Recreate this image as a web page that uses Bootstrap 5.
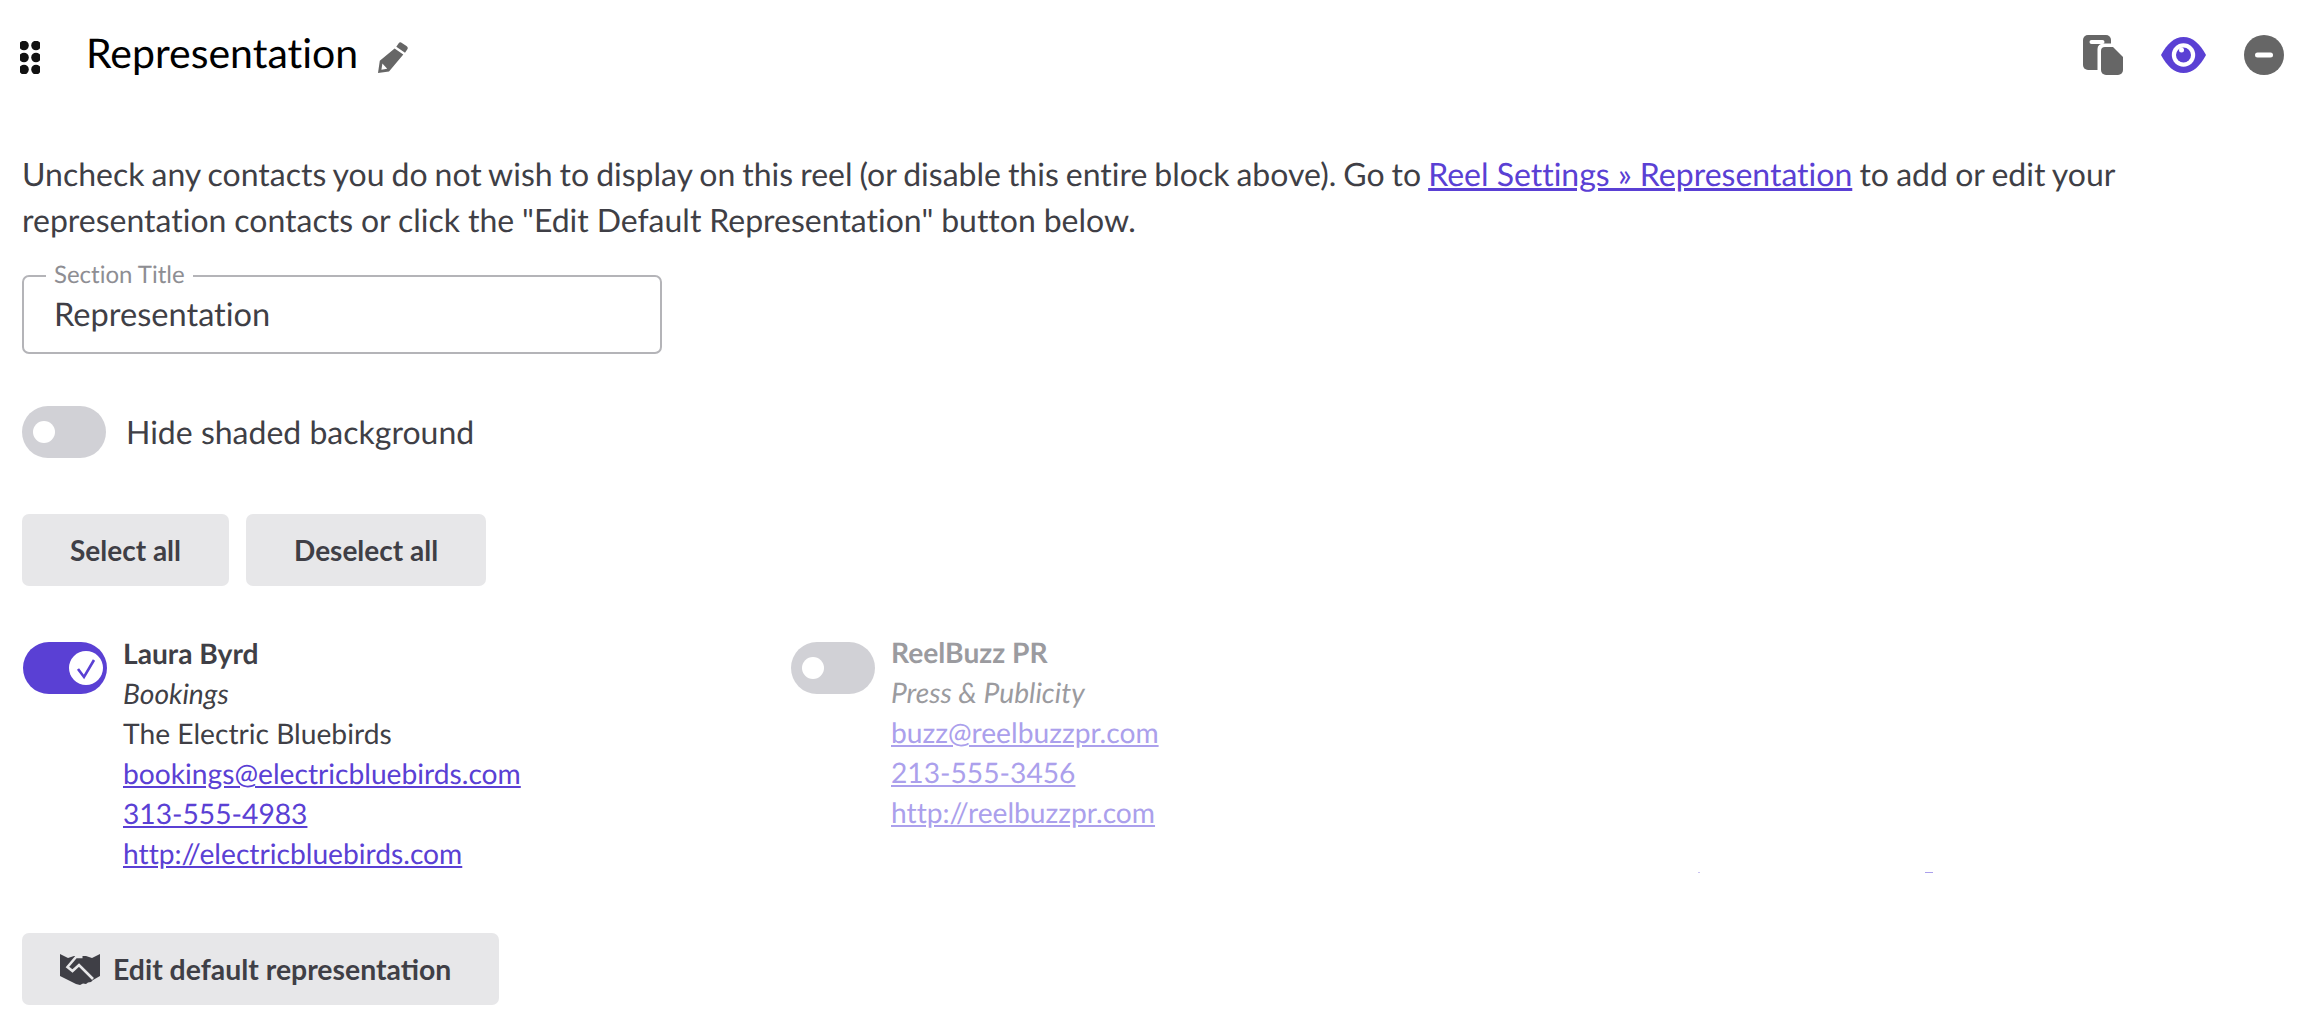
<!DOCTYPE html>
<html lang="en">
<head>
    <meta charset="UTF-8">
    <meta name="viewport" content="width=device-width, initial-scale=1.0">
    <title>Representation</title>
    <link href="https://cdn.jsdelivr.net/npm/bootstrap@5.3.3/dist/css/bootstrap.min.css" rel="stylesheet">
    <style>
        body { font-family: Lato, "Liberation Sans", sans-serif; color: #3f3f46; background: #fff; font-size: 32px; line-height: 46px; text-rendering: geometricPrecision; font-variant-ligatures: none; }
        a { color: #5a40d4; }
        .block-head { height: 110px; padding-left: 20px; padding-right: 22px; }
        .block-title { font-size: 41px; line-height: 50px; font-weight: 400; color: #000; margin: -4px 0 0 46px; }
        .grip-icon { width: 20px; height: 33px; margin-top: 5px; }
        .pencil-icon { width: 30px; height: 31px; margin-left: 20px; margin-top: 4px; }
        .head-icons { gap: 38px; }
        .intro-text { padding: 41px 22px 0; margin: 0; }
        .tight-words { word-spacing: -1.2px; }
        .tight-tail { word-spacing: -1px; }
        .tight-line { word-spacing: -.3px; }
        .title-field { width: 640px; height: 79px; margin: 32px 0 0 22px; border: 2px solid #b4b4b8; border-radius: 7px; padding: 14px 20px 0 30px; line-height: 46px; font-size: 32.6px; }
        .title-label { top: -16px; left: 22px; padding: 0 8px; font-size: 24px; line-height: 28px; color: #8e8e93; background: #fff; }
        .hide-row { margin: 52px 0 0 22px; gap: 20px; }
        .rep-toggle.form-check-input { width: 84px; height: 52px; margin: 9px 0 0; border: 0; border-radius: 26px; background-color: #d1d1d6; background-position: 0 0; background-size: 84px 52px; flex-shrink: 0;
            background-image: url("data:image/svg+xml,%3Csvg xmlns='http://www.w3.org/2000/svg' viewBox='0 0 84 52'%3E%3Ccircle cx='22' cy='26' r='11' fill='%23fff'/%3E%3C/svg%3E"); }
        .hide-row .rep-toggle.form-check-input { margin-top: 0; }
        .rep-toggle.form-check-input:checked[type=checkbox] { background-color: #5a40d4;
            background-image: url("data:image/svg+xml,%3Csvg xmlns='http://www.w3.org/2000/svg' viewBox='0 0 84 52'%3E%3Ccircle cx='63' cy='26' r='17' fill='%23fff'/%3E%3Cpath d='M55 27l6 8 10-17' fill='none' stroke='%235a40d4' stroke-width='2.6'/%3E%3C/svg%3E"); }
        .rep-toggle.form-check-input:focus { box-shadow: none; }
        .select-row { margin: 56px 0 0 22px; gap: 17px; }
        .grey-btn { background: #e7e7e9; color: #3f3f46; border: 0; border-radius: 7px; height: 72px; font-size: 28px; font-weight: 700; line-height: 40px; padding: 0 48px; }
        .grey-btn:hover { background: #e7e7e9; color: #3f3f46; }
        .contact-list { margin-top: 48px; padding-left: 23px; font-size: 28.2px; line-height: 40px; }
        .contact-item { width: 768px; gap: 16px; }
        .contact-item .rep-toggle.form-check-input { margin-top: 8px; }
        .contact-off { width: 700px; color: #9b9b9f; }
        .contact-off a { color: #aba0ec; }
        .contact-off .contact-text { margin-top: -1px; }
        .contact-name { font-weight: 700; }
        .clip-strip { height: 1px; margin-top: -2px; }
        .clip-a { width: 2px; margin-left: 1698px; background: #c9c2f2; }
        .clip-b { width: 8px; margin-left: 225px; background: #aba0ec; }
        .edit-row { margin: 60px 0 0 22px; }
        .grey-btn.edit-btn { padding: 0 48px 0 38px; gap: 13px; font-size: 28.4px; }
    </style>
</head>
<body>
    <div class="block-head d-flex align-items-center">
        <svg class="grip-icon" viewBox="0 0 20 33" fill="#111">
            <circle cx="4" cy="4.500" r="4.800"/><circle cx="16" cy="4.500" r="4.800"/>
            <circle cx="4" cy="16.500" r="4.800"/><circle cx="16" cy="16.500" r="4.800"/>
            <circle cx="4" cy="28.500" r="4.800"/><circle cx="16" cy="28.500" r="4.800"/>
        </svg>
        <h1 class="block-title">Representation</h1>
        <svg class="pencil-icon" viewBox="0 0 30 31" fill="#666">
            <path d="M20.5 1.5a2.5 2.5 0 0 1 3.4-.6l4.6 3.1a2.5 2.5 0 0 1 .7 3.5l-2.2 3.2-8.7-6z"/>
            <path d="M16.6 6.4l8.7 6L11 29.5 0 31l1.8-12.2zM4.4 21.5l-1 6.2 5.800-.9z"/>
        </svg>
        <div class="head-icons d-flex align-items-center ms-auto">
            <svg width="40" height="40" viewBox="0 0 40 40">
                <rect width="28" height="35" rx="5" fill="#666"/>
                <rect x="6.500" y="5" width="15" height="4" rx="2" fill="#fff"/>
                <path d="M20 12h10l10 10v13a5 5 0 0 1-5 5H23a5 5 0 0 1-5-5V14a2 2 0 0 1 2-2z" fill="#fff" stroke="#fff" stroke-width="7"/>
                <path d="M22 12h8l10 10v13a5 5 0 0 1-5 5H23a5 5 0 0 1-5-5V16a4 4 0 0 1 4-4z" fill="#666"/>
            </svg>
            <svg width="45" height="36" viewBox="0 0 45 36">
                <path d="M0 18C6 7 13 0 22.500 0S39 7 45 18C39 29 32 36 22.500 36S6 29 0 18z" fill="#5a40d4"/>
                <circle cx="22.500" cy="18" r="11.700" fill="#fff"/>
                <circle cx="22.500" cy="18" r="7.500" fill="#5a40d4"/>
                <circle cx="20.500" cy="13" r="2.500" fill="#fff"/>
            </svg>
            <svg width="40" height="40" viewBox="0 0 40 40">
                <circle cx="20" cy="20" r="20" fill="#666"/>
                <rect x="11" y="17.500" width="18" height="5" rx="2.500" fill="#fff"/>
            </svg>
        </div>
    </div>

    <p class="intro-text"><span class="tight-words">Uncheck any contacts you do not wish to display on this reel (or disable this entire block above). Go to </span><a href="#">Reel Settings » Representation</a><span class="tight-tail"> to add or edit your</span><br><span class="tight-line">representation contacts or click the "Edit Default Representation" button below.</span></p>

    <div class="title-field position-relative">
        <span class="title-label position-absolute">Section Title</span>
        Representation
    </div>

    <div class="hide-row d-flex align-items-center">
        <input class="rep-toggle form-check-input" type="checkbox" id="hideShaded">
        <label for="hideShaded">Hide shaded background</label>
    </div>

    <div class="select-row d-flex">
        <button class="btn grey-btn" type="button">Select all</button>
        <button class="btn grey-btn" type="button">Deselect all</button>
    </div>

    <div class="contact-list d-flex">
        <div class="contact-item d-flex">
            <input class="rep-toggle form-check-input" type="checkbox" checked>
            <div class="contact-text">
                <div class="contact-name">Laura Byrd</div>
                <div class="fst-italic">Bookings</div>
                <div>The Electric Bluebirds</div>
                <div><a href="#">bookings@electricbluebirds.com</a></div>
                <div><a href="#">313-555-4983</a></div>
                <div><a href="#">http://electricbluebirds.com</a></div>
            </div>
        </div>
        <div class="contact-item contact-off d-flex">
            <input class="rep-toggle form-check-input" type="checkbox">
            <div class="contact-text">
                <div class="contact-name">ReelBuzz PR</div>
                <div class="fst-italic">Press &amp; Publicity</div>
                <div><a href="#">buzz@reelbuzzpr.com</a></div>
                <div><a href="#">213-555-3456</a></div>
                <div><a href="#">http://reelbuzzpr.com</a></div>
            </div>
        </div>
    </div>
    <div class="clip-strip d-flex"><span class="clip-a"></span><span class="clip-b"></span></div>

    <div class="edit-row">
        <button class="btn grey-btn edit-btn d-inline-flex align-items-center" type="button">
            <svg width="40" height="31" viewBox="0 0 40 31">
                <path d="M0 0l8 4 6-2h12l6 2 8-4v22l-7 4-2 2-3 .5-2 1.500-3-.5-3 1.500-4-1L0 22z" fill="#3f3f46"/>
                <path d="M22.500 3H16L7.500 13l5 4L19 11l14 14" fill="none" stroke="#e7e7e9" stroke-width="2.600"/>
            </svg>
            Edit default representation
        </button>
    </div>

    <script src="https://cdn.jsdelivr.net/npm/bootstrap@5.3.3/dist/js/bootstrap.bundle.min.js"></script>
</body>
</html>
